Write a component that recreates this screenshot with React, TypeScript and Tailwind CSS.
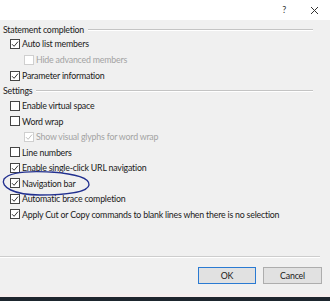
import type { ReactNode } from 'react'

type Item = {
  label: string
  checked: boolean
  disabled?: boolean
  indent?: boolean
}

const statementItems: Item[] = [
  { label: 'Auto list members', checked: true },
  { label: 'Hide advanced members', checked: false, disabled: true, indent: true },
  { label: 'Parameter information', checked: true },
]

const settingsItems: Item[] = [
  { label: 'Enable virtual space', checked: false },
  { label: 'Word wrap', checked: false },
  { label: 'Show visual glyphs for word wrap', checked: true, disabled: true, indent: true },
  { label: 'Line numbers', checked: false },
  { label: 'Enable single-click URL navigation', checked: true },
  { label: 'Navigation bar', checked: true },
  { label: 'Automatic brace completion', checked: true },
  { label: 'Apply Cut or Copy commands to blank lines when there is no selection', checked: true },
]

function Box({ checked, disabled }: { checked: boolean; disabled?: boolean }) {
  return (
    <span
      className={[
        'mr-[2px] inline-flex h-[10px] w-[10px] shrink-0 items-center justify-center border bg-white',
        disabled ? 'border-[#cfcfcf]' : 'border-[#444]',
      ].join(' ')}
    >
      {checked && (
        <svg width="8" height="8" viewBox="0 0 8 8">
          <path
            d="M1 4.2 L3.1 6.3 L7 1.6"
            fill="none"
            stroke={disabled ? '#bdbdbd' : '#333'}
            strokeWidth="1"
          />
        </svg>
      )}
    </span>
  )
}

function Row({ item, h }: { item: Item; h: string }) {
  return (
    <div className={['flex items-center', h, item.indent ? 'pl-[21px]' : 'pl-[7px]'].join(' ')}>
      <Box checked={item.checked} disabled={item.disabled} />
      <span className={item.disabled ? 'text-[#a3a3a3]' : 'text-[#1a1a1a]'}>{item.label}</span>
    </div>
  )
}

function Group({ title, className, children }: { title: string; className: string; children: ReactNode }) {
  return (
    <>
      <div className={['flex items-center pr-[17px]', className].join(' ')}>
        <span className="text-[#1a1a1a]">{title}</span>
        <span className="ml-[4px] flex-1 border-t border-b border-t-[#c4c4c4] border-b-white" />
      </div>
      {children}
    </>
  )
}

export default function App() {
  return (
    <div
      className="relative flex h-[301px] w-[330px] flex-col overflow-hidden bg-[#f0f0f0] text-[8.8px] tracking-[-0.2px]"
      style={{ fontFamily: 'Lato, "Segoe UI", sans-serif' }}
    >
      <div className="flex h-[20px] items-center justify-end bg-white pr-[11px] text-[#333]">
        <span className="mr-[24px] text-[9px]">?</span>
        <svg width="9" height="9" viewBox="0 0 9 9">
          <path d="M1 1 L8 8 M8 1 L1 8" stroke="#333" strokeWidth="1" />
        </svg>
      </div>

      <div className="flex flex-col pl-[3px] pt-[4px]">
        <Group title="Statement completion" className="h-[12px]">
          {statementItems.map((it) => (
            <Row key={it.label} item={it} h="h-[16px]" />
          ))}
        </Group>
        <Group title="Settings" className="h-[14px]">
          {settingsItems.map((it) => (
            <Row key={it.label} item={it} h="h-[15.5px]" />
          ))}
        </Group>
      </div>

      <div className="mt-auto">
        <div className="mr-[10px] border-t border-b border-t-[#cdcdcd] border-b-white" />
        <div className="flex justify-end gap-[7px] pr-[8px] pt-[9px] pb-[10px]">
          <button className="h-[17px] w-[58px] border border-[#2a7ad2] bg-[#e1e1e1] text-[#1a1a1a]">OK</button>
          <button className="h-[17px] w-[59px] border border-[#adadad] bg-[#e1e1e1] text-[#1a1a1a]">Cancel</button>
        </div>
        <div className="h-[3px] bg-[#f6eeee]" />
        <div className="h-[4px] bg-[#1d262e]" />
      </div>

      <svg
        className="pointer-events-none absolute left-0 top-0"
        width="330"
        height="301"
        viewBox="0 0 330 301"
      >
        <path
          d="M58 172.5 C32 170.5 10 171.5 4 179 C0 187 14 195 40 195 C66 195 88 192 89 185 C90 178 76 174 52 172"
          fill="none"
          stroke="#22308f"
          strokeWidth="1.4"
        />
      </svg>
    </div>
  )
}
